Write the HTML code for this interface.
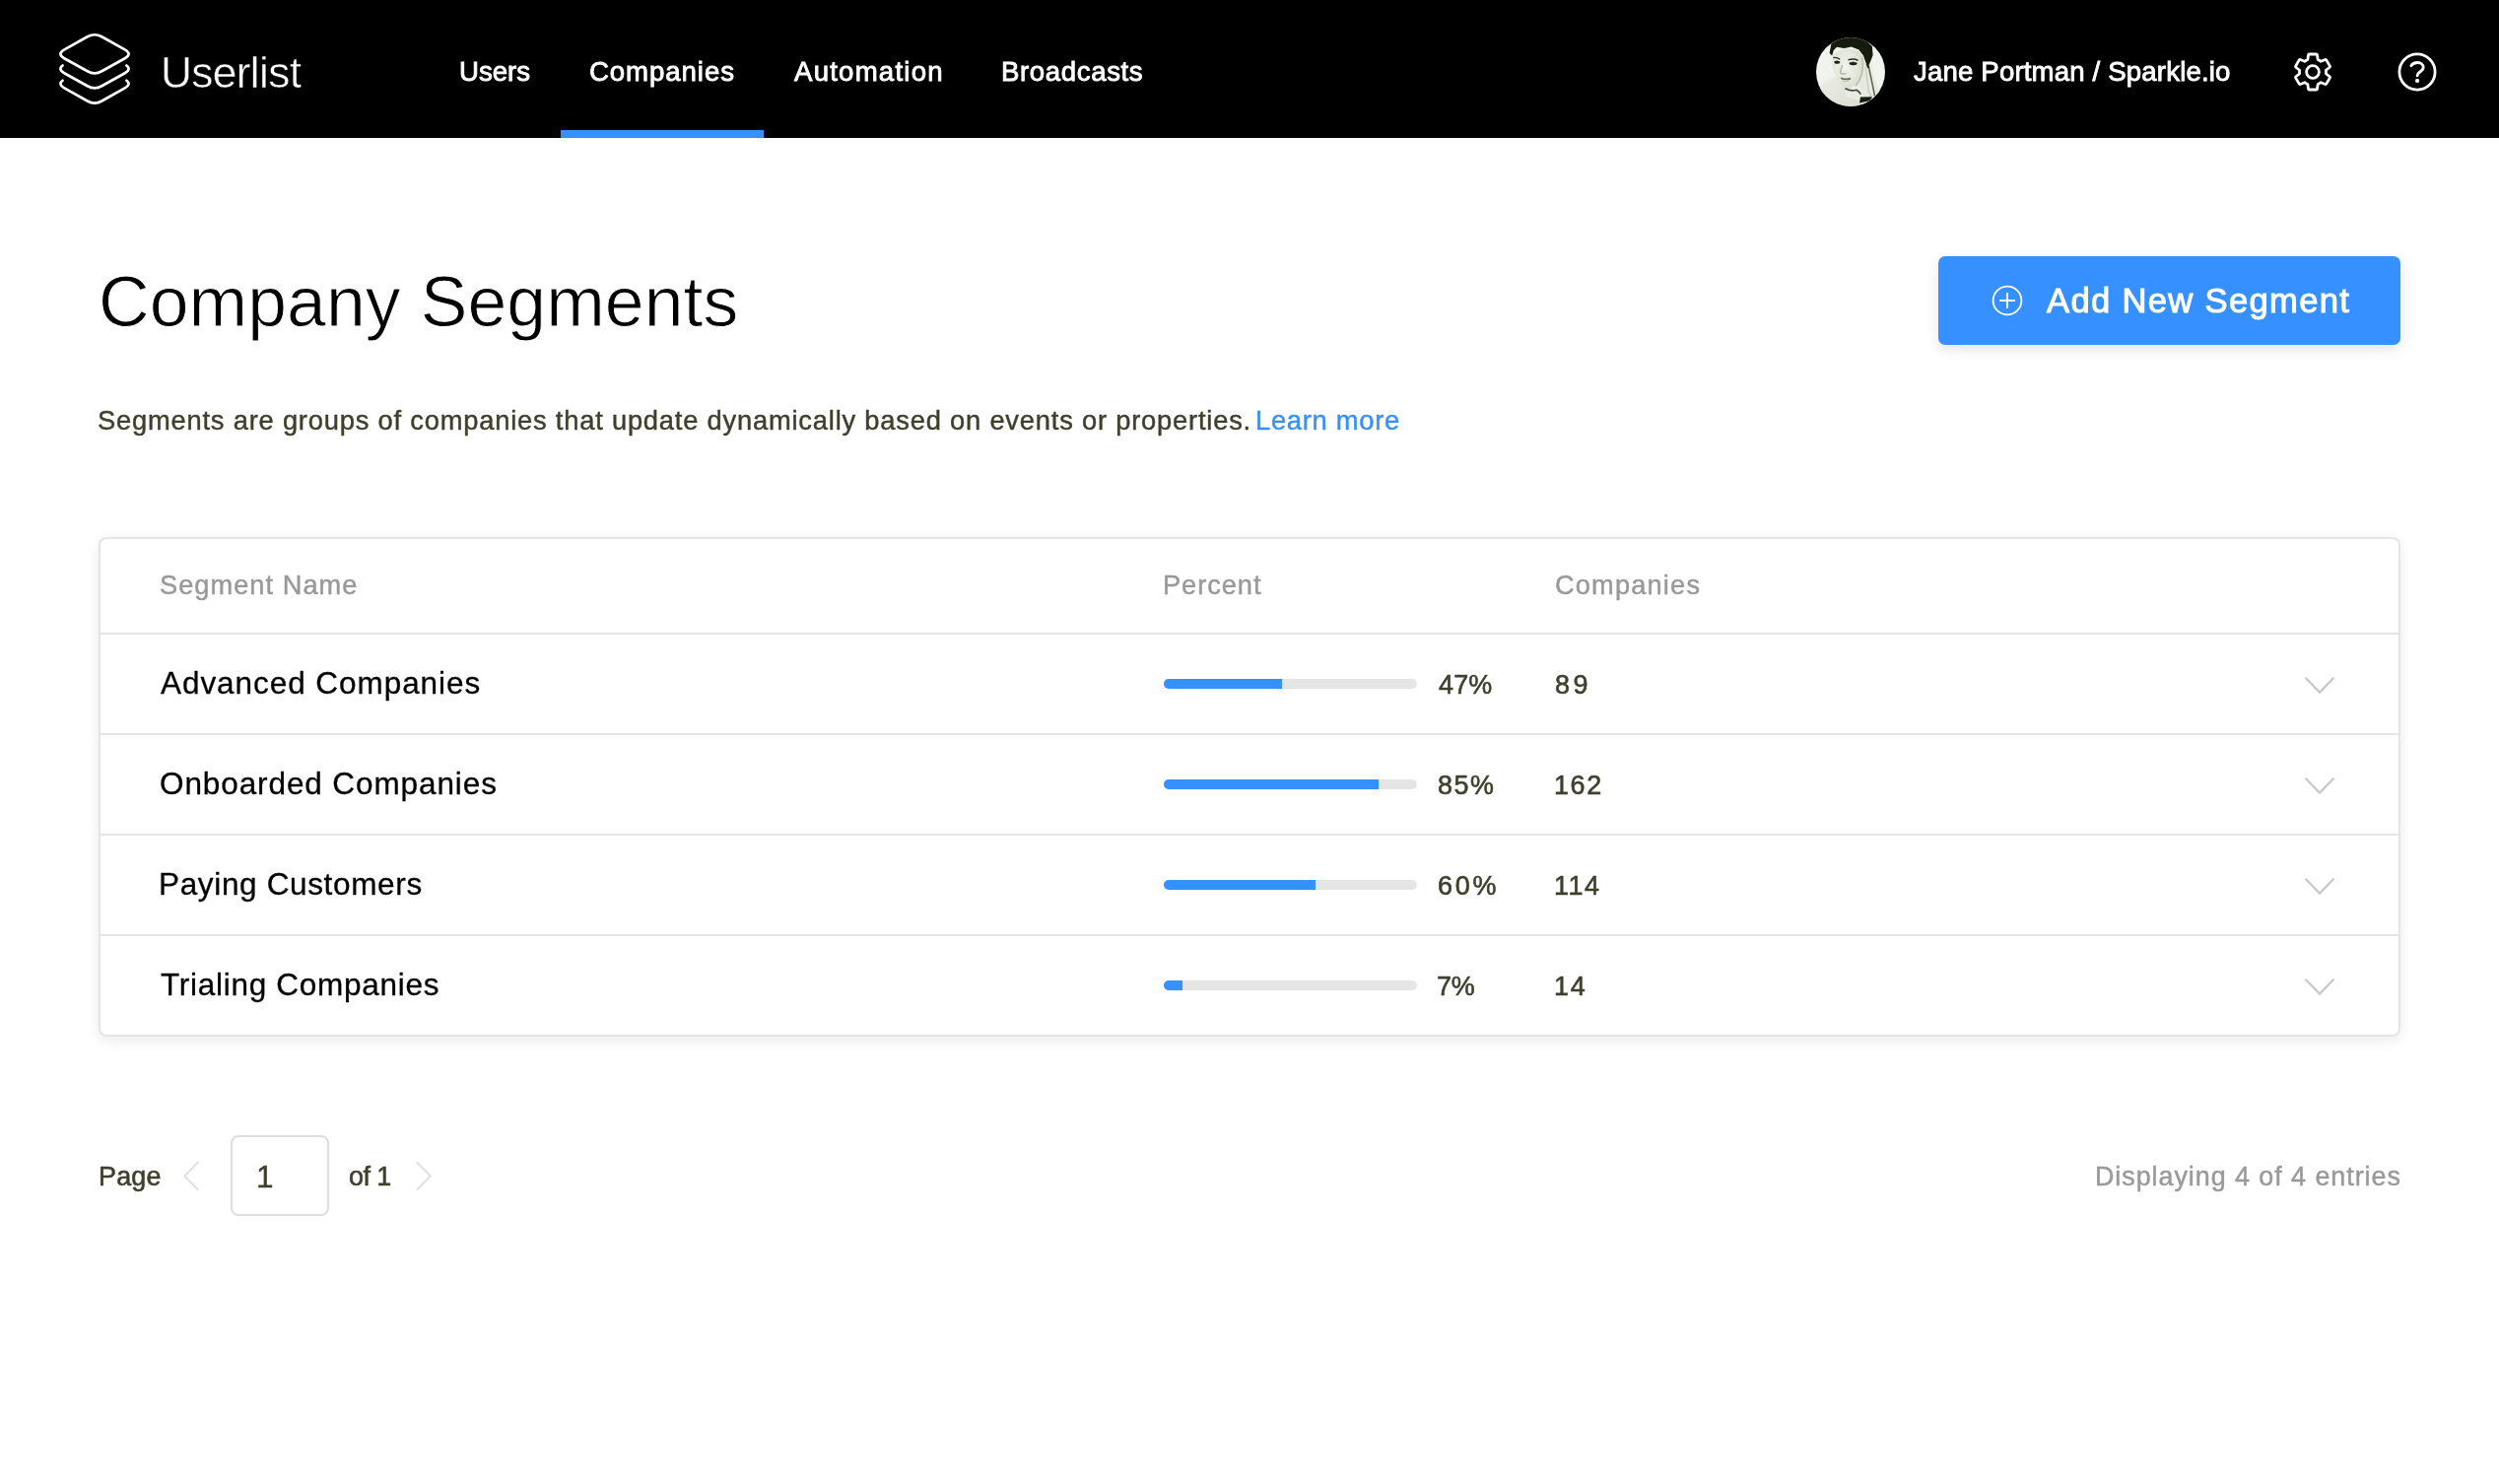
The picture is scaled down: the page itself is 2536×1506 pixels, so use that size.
<!DOCTYPE html>
<html><head><meta charset="utf-8"><title>Company Segments</title>
<style>
html,body{margin:0;padding:0;background:#fff}
body{width:2536px;height:1506px;position:relative;overflow:hidden;font-family:"Liberation Sans",sans-serif}
.abs{position:absolute}
.t{position:absolute;white-space:nowrap;line-height:1;will-change:transform;font-family:"Liberation Sans",sans-serif}
#hdr{position:absolute;left:0;top:0;width:2536px;height:140px;background:#000}
#navbar{position:absolute;left:569px;top:132px;width:206px;height:8px;background:#3690ff}
#btn-bg{position:absolute;left:1967px;top:260px;width:469px;height:90px;border-radius:7px;background:#3690ff;box-shadow:0 5px 14px rgba(0,0,0,0.10)}
#card{position:absolute;left:100px;top:545px;width:2332px;height:503px;border:2px solid #e4e4e4;border-radius:8px;background:#fff;box-shadow:0 4px 14px rgba(0,0,0,0.08)}
.sep{position:absolute;left:102px;width:2332px;height:2px;background:#e4e4e4}
.track{position:absolute;left:1181px;width:257px;height:10px;border-radius:5px;background:#e5e5e5;overflow:hidden}
.fill{height:10px;background:#3690ff}
#pgbox{position:absolute;left:234px;top:1152px;width:96px;height:78px;border:2px solid #dedede;border-radius:8px;background:#fff}
</style></head><body>
<div id="hdr"></div>
<div id="navbar"></div>
<svg class="abs" style="left:0;top:0" width="200" height="140" viewBox="0 0 200 140" fill="none" stroke="#fff" stroke-width="2.7" stroke-linecap="round" stroke-linejoin="round">
<path d="M65.3 50.4 Q57.5 54.8 65.3 59.199999999999996 L88.7 72.30000000000001 Q96.0 76.4 103.3 72.30000000000001 L126.7 59.199999999999996 Q134.5 54.8 126.7 50.4 L103.3 37.300000000000004 Q96.0 33.2 88.7 37.300000000000004Z"/>
<path d="M63.54 66.54 Q58.51 70.37 65.30 74.20 L88.70 87.30 Q96.0 91.40 103.30 87.30 L126.70 74.20 Q133.49 70.37 128.46 66.54"/>
<path d="M63.54 81.74 Q58.51 85.57 65.30 89.40 L88.70 102.50 Q96.0 106.60 103.30 102.50 L126.70 89.40 Q133.49 85.57 128.46 81.74"/>
</svg>
<svg class="abs" style="left:1843px;top:38px" width="70" height="70" viewBox="0 0 70 70">
<defs><clipPath id="av"><circle cx="35" cy="35" r="35"/></clipPath>
<radialGradient id="fg" cx="0.42" cy="0.45" r="0.75"><stop offset="0" stop-color="#f1f3ec"/><stop offset="0.55" stop-color="#e3e6da"/><stop offset="0.88" stop-color="#d3d7c8"/><stop offset="1" stop-color="#b9beab"/></radialGradient>
<linearGradient id="sw" x1="0" y1="0" x2="1" y2="1"><stop offset="0" stop-color="#eceee6"/><stop offset="1" stop-color="#d9dcd0"/></linearGradient>
<filter id="b1" x="-20%" y="-20%" width="140%" height="140%"><feGaussianBlur stdDeviation="0.7"/></filter>
<filter id="b2" x="-20%" y="-20%" width="140%" height="140%"><feGaussianBlur stdDeviation="1.3"/></filter>
<filter id="b0" x="-20%" y="-20%" width="140%" height="140%"><feGaussianBlur stdDeviation="0.4"/></filter>
</defs>
<g clip-path="url(#av)">
<rect width="70" height="70" fill="#f1f3ee"/>
<g filter="url(#b2)">
<path d="M3 52 C8 44 16 40 22 40 L30 50 L42 56 L50 62 L56 70 L0 70Z" fill="url(#sw)"/>
<path d="M47 22 L55 24 L58 40 L64 54 L66 62 L56 70 L44 66 L42 54Z" fill="#e6e9df"/>
</g>
<g filter="url(#b1)">
<path d="M17 19 C15.5 26 17 34 19.5 39 C22 45 26.5 50.5 31.5 52 C36 52.5 41 48 44 42 C47 36 48 28 46.8 19 C44 10 22 9 17 19Z" fill="url(#fg)"/>
<path d="M30 52 Q36 55.5 42 53 L46 58 L44 64 L30 60 Z" fill="#e9ebe3"/>
</g>
<g filter="url(#b1)">
<path d="M15.4 6.1 L22.9 1.8 L32.6 -0.5 L43.4 0.2 L51.5 4.0 L56.9 9.0 L57.6 17.9 L55.5 23.5 L52.6 30.2 L50.4 25.5 L48 18.4 L43.4 12.6 L35.9 9.6 L28.3 10.9 L21 9.8 L17.8 13.1 L16.2 18.4 L13.6 15.9Z" fill="#161b0c"/>
</g>
<g filter="url(#b0)">
<path d="M17.3 20.6 Q21 19.6 24.2 22.2" stroke="#2a301e" stroke-width="1.3" fill="none"/>
<path d="M32.4 22.9 Q38 21 42.6 23.4" stroke="#2a301e" stroke-width="1.4" fill="none"/>
<ellipse cx="21.3" cy="25.3" rx="2.9" ry="1.5" fill="#1a1f10"/>
<ellipse cx="37.6" cy="26.6" rx="3.9" ry="1.7" fill="#1a1f10"/>
<path d="M18.4 24.6 Q21.3 23 24.3 25" stroke="#2a301e" stroke-width="0.7" fill="none"/>
<path d="M33.6 25.8 Q37.6 23.9 41.6 26.3" stroke="#2a301e" stroke-width="0.7" fill="none"/>
</g>
<g filter="url(#b1)">
<path d="M26.5 28 Q25 33 24.6 35.8 Q27 37.8 30.5 36.4" stroke="#b4b8a6" stroke-width="1.5" fill="none"/>
<path d="M25 41.3 Q30 43.4 35 41.6" stroke="#6b705c" stroke-width="1.7" fill="none"/>
<path d="M26.5 43.8 Q30 45.3 33.5 43.9" stroke="#c3c7b6" stroke-width="1.4" fill="none"/>
<path d="M29.4 51.8 Q35 55 40.8 53.2 Q43.6 54.6 45.4 57.6" stroke="#3d4330" stroke-width="1.6" fill="none"/>
<path d="M46.8 20 Q48.5 30 46 38 Q44 45 40 49.5" stroke="#b9bdab" stroke-width="1.6" fill="none"/>
<path d="M51.6 27.2 L53.6 31" stroke="#20261a" stroke-width="2.2" fill="none"/><path d="M53.6 31 L56.4 44 L59.6 59.5" stroke="#5d6350" stroke-width="1.5" fill="none"/><path d="M50 30 Q52 42 52.5 50 Q53 56 56 60" stroke="#c5c9b8" stroke-width="1.2" fill="none"/>
</g>
<g filter="url(#b0)"><path d="M45 60.5 L57 60.3 L54.4 64.3 L44 66.6Z" fill="#161b0c"/></g>
</g></svg>
<svg class="abs" style="left:2317px;top:43.2px" width="60" height="60" viewBox="-30 -30 60 60" fill="none" stroke="#fff" stroke-width="2.8" stroke-linejoin="round">
<g transform="scale(1.8) translate(-12 -12)" stroke-width="1.556"><path d="M19.43 12.98c.04-.32.07-.64.07-.98 0-.34-.03-.66-.07-.98l2.11-1.65c.19-.15.24-.42.12-.64l-2-3.46c-.09-.16-.26-.25-.44-.25-.06 0-.12.01-.17.03l-2.49 1c-.52-.4-1.08-.73-1.69-.98l-.38-2.65C14.46 2.18 14.25 2 14 2h-4c-.25 0-.46.18-.49.42l-.38 2.65c-.61.25-1.17.59-1.69.98l-2.49-1c-.06-.02-.12-.03-.18-.03-.17 0-.34.09-.43.25l-2 3.46c-.13.22-.07.49.12.64l2.11 1.65c-.04.32-.07.65-.07.98 0 .33.03.66.07.98l-2.11 1.65c-.19.15-.24.42-.12.64l2 3.46c.09.16.26.25.44.25.06 0 .12-.01.17-.03l2.49-1c.52.4 1.08.73 1.69.98l.38 2.65c.03.24.24.42.49.42h4c.25 0 .46-.18.49-.42l.38-2.65c.61-.25 1.17-.59 1.69-.98l2.49 1c.06.02.12.03.18.03.17 0 .34-.09.43-.25l2-3.46c.12-.22.07-.49-.12-.64l-2.11-1.65z"/></g>
<circle cx="0" cy="0" r="6.4"/>
</svg>
<svg class="abs" style="left:2423px;top:43.2px" width="60" height="60" viewBox="-30 -30 60 60" fill="none" stroke="#fff" stroke-width="2.8" stroke-linecap="round" stroke-linejoin="round">
<circle cx="0" cy="0" r="18.1"/>
<path d="M-6.2 -6.2 C-4.9 -8.4 -2.7 -9.5 0.2 -9.5 C3.7 -9.5 6.2 -7.6 6.2 -4.7 C6.2 -2.1 4.3 -0.9 2.5 0.2 C0.8 1.2 0.1 2.1 0.1 3.9"/>
<circle cx="0.1" cy="8.9" r="2.1" fill="#fff" stroke="none"/>
</svg>
<div id="btn-bg"></div>
<svg class="abs" style="left:2017px;top:284.8px" width="40" height="40" viewBox="-20 -20 40 40" fill="none" stroke="#fff" stroke-width="1.8"><circle cx="0" cy="0" r="14.4"/><path d="M-8 0H8M0 -8V8"/></svg>
<div id="card"></div>
<div class="sep" style="top:642px"></div>
<div class="sep" style="top:744px"></div>
<div class="sep" style="top:846px"></div>
<div class="sep" style="top:948px"></div>
<div class="track" style="top:689px"><div class="fill" style="width:119.9px"></div></div><div class="track" style="top:791px"><div class="fill" style="width:217.9px"></div></div><div class="track" style="top:893px"><div class="fill" style="width:153.7px"></div></div><div class="track" style="top:995px"><div class="fill" style="width:19.0px"></div></div>
<svg class="abs" style="left:2334px;top:682px" width="40" height="30" viewBox="0 0 40 30" fill="none" stroke="#c8c8c8" stroke-width="2.2"><path d="M5.6 5.8 L20 20.6 L34.4 5.8"/></svg><svg class="abs" style="left:2334px;top:784px" width="40" height="30" viewBox="0 0 40 30" fill="none" stroke="#c8c8c8" stroke-width="2.2"><path d="M5.6 5.8 L20 20.6 L34.4 5.8"/></svg><svg class="abs" style="left:2334px;top:886px" width="40" height="30" viewBox="0 0 40 30" fill="none" stroke="#c8c8c8" stroke-width="2.2"><path d="M5.6 5.8 L20 20.6 L34.4 5.8"/></svg><svg class="abs" style="left:2334px;top:988px" width="40" height="30" viewBox="0 0 40 30" fill="none" stroke="#c8c8c8" stroke-width="2.2"><path d="M5.6 5.8 L20 20.6 L34.4 5.8"/></svg>
<div id="pgbox"></div>
<svg class="abs" style="left:180px;top:1173px" width="30" height="40" viewBox="0 0 30 40" fill="none" stroke="#e2e2e2" stroke-width="2.2"><path d="M21.4 6 L7.4 20.4 L21.4 34.8"/></svg>
<svg class="abs" style="left:415px;top:1173px" width="30" height="40" viewBox="0 0 30 40" fill="none" stroke="#e2e2e2" stroke-width="2.2"><path d="M7.8 6 L21.8 20.4 L7.8 34.8"/></svg>
<span id="logo" class="t" style="left:162.56px;top:51.90px;font-size:44.3px;color:#fff;letter-spacing:-0.666px;-webkit-text-stroke:0.5px #000">Userlist</span>
<span id="nav1" class="t" style="left:465.80px;top:59.44px;font-size:27.6px;color:#fff;letter-spacing:-0.005px;-webkit-text-stroke:0.85px #fff">Users</span>
<span id="nav2" class="t" style="left:598.03px;top:59.44px;font-size:27.6px;color:#fff;letter-spacing:0.923px;-webkit-text-stroke:0.85px #fff">Companies</span>
<span id="nav3" class="t" style="left:806.20px;top:59.44px;font-size:27.6px;color:#fff;letter-spacing:1.221px;-webkit-text-stroke:0.85px #fff">Automation</span>
<span id="nav4" class="t" style="left:1016.18px;top:59.44px;font-size:27.6px;color:#fff;letter-spacing:0.625px;-webkit-text-stroke:0.85px #fff">Broadcasts</span>
<span id="user" class="t" style="left:1941.55px;top:59.44px;font-size:27.6px;color:#fff;letter-spacing:0.165px;-webkit-text-stroke:0.85px #fff">Jane Portman / Sparkle.io</span>
<span id="title" class="t" style="left:99.51px;top:270.70px;font-size:71.5px;color:#000;letter-spacing:0.096px;-webkit-text-stroke:0.9px #fff">Company Segments</span>
<span id="desc" class="t" style="left:99.00px;top:413.28px;font-size:27.3px;color:#3f3f2c;letter-spacing:0.797px;-webkit-text-stroke:0.45px #3f3f2c">Segments are groups of companies that update dynamically based on events or properties.</span>
<span id="learn" class="t" style="left:1274.40px;top:413.28px;font-size:27.3px;color:#3690ff;letter-spacing:0.735px;-webkit-text-stroke:0.45px #3690ff">Learn more</span>
<span id="btn" class="t" style="left:2077.00px;top:288.31px;font-size:34.6px;color:#fff;letter-spacing:1.331px;-webkit-text-stroke:1.0px #fff">Add New Segment</span>
<span id="h1" class="t" style="left:161.80px;top:580.37px;font-size:27.2px;color:#999999;letter-spacing:1.045px;-webkit-text-stroke:0.45px #999999">Segment Name</span>
<span id="h2" class="t" style="left:1180.20px;top:580.37px;font-size:27.2px;color:#999999;letter-spacing:0.958px;-webkit-text-stroke:0.45px #999999">Percent</span>
<span id="h3" class="t" style="left:1577.80px;top:580.37px;font-size:27.2px;color:#999999;letter-spacing:1.182px;-webkit-text-stroke:0.45px #999999">Companies</span>
<span id="r1" class="t" style="left:163.19px;top:677.69px;font-size:31.5px;color:#000;letter-spacing:0.942px;-webkit-text-stroke:0.3px #000">Advanced Companies</span>
<span id="r2" class="t" style="left:161.80px;top:779.69px;font-size:31.5px;color:#000;letter-spacing:0.899px;-webkit-text-stroke:0.3px #000">Onboarded Companies</span>
<span id="r3" class="t" style="left:160.80px;top:881.69px;font-size:31.5px;color:#000;letter-spacing:0.653px;-webkit-text-stroke:0.3px #000">Paying Customers</span>
<span id="r4" class="t" style="left:162.80px;top:983.69px;font-size:31.5px;color:#000;letter-spacing:0.723px;-webkit-text-stroke:0.3px #000">Trialing Companies</span>
<span id="p1" class="t" style="left:1459.60px;top:681.88px;font-size:26.9px;color:#3f3f2c;letter-spacing:0.193px;-webkit-text-stroke:0.6px #3f3f2c">47%</span>
<span id="p2" class="t" style="left:1458.64px;top:783.88px;font-size:26.9px;color:#3f3f2c;letter-spacing:1.591px;-webkit-text-stroke:0.6px #3f3f2c">85%</span>
<span id="p3" class="t" style="left:1458.60px;top:885.88px;font-size:26.9px;color:#3f3f2c;letter-spacing:2.796px;-webkit-text-stroke:0.6px #3f3f2c">60%</span>
<span id="p4" class="t" style="left:1457.60px;top:987.88px;font-size:26.9px;color:#3f3f2c;letter-spacing:-0.202px;-webkit-text-stroke:0.6px #3f3f2c">7%</span>
<span id="c1" class="t" style="left:1577.84px;top:681.88px;font-size:26.9px;color:#3f3f2c;letter-spacing:3.620px;-webkit-text-stroke:0.6px #3f3f2c">89</span>
<span id="c2" class="t" style="left:1577.25px;top:783.88px;font-size:26.9px;color:#3f3f2c;letter-spacing:1.609px;-webkit-text-stroke:0.6px #3f3f2c">162</span>
<span id="c3" class="t" style="left:1577.05px;top:885.88px;font-size:26.9px;color:#3f3f2c;letter-spacing:1.537px;-webkit-text-stroke:0.6px #3f3f2c">114</span>
<span id="c4" class="t" style="left:1577.25px;top:987.88px;font-size:26.9px;color:#3f3f2c;letter-spacing:1.802px;-webkit-text-stroke:0.6px #3f3f2c">14</span>
<span id="page" class="t" style="left:99.90px;top:1180.68px;font-size:26.9px;color:#3f3f2c;letter-spacing:0.238px;-webkit-text-stroke:0.6px #3f3f2c">Page</span>
<span id="pg1" class="t" style="left:259.60px;top:1178.99px;font-size:31.5px;color:#3f3f2c;letter-spacing:0.000px;-webkit-text-stroke:0.4px #3f3f2c">1</span>
<span id="of1" class="t" style="left:353.95px;top:1180.68px;font-size:26.9px;color:#3f3f2c;letter-spacing:-0.515px;-webkit-text-stroke:0.6px #3f3f2c">of 1</span>
<span id="disp" class="t" style="left:2126.19px;top:1180.68px;font-size:26.9px;color:#999999;letter-spacing:0.952px;-webkit-text-stroke:0.45px #999999">Displaying 4 of 4 entries</span>
</body></html>
